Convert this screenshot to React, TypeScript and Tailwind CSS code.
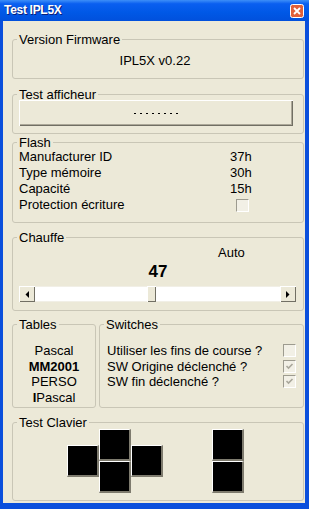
import React from 'react';

const Group: React.FC<{ label: string; className?: string; children?: React.ReactNode }> = ({ label, className = '', children }) => (
    <fieldset className={`border border-[#c9c6b6] rounded-[3px] min-w-0 ${className}`}>
        <legend className="ml-[4px] px-[2px] leading-[15px]">{label}</legend>
        {children}
    </fieldset>
);

const Check: React.FC<{ checked?: boolean }> = ({ checked }) => (
    <div className="w-[13px] h-[13px] border-t border-l border-[#9d9b8f] border-r border-b border-r-white border-b-white bg-[#f2f0e6] flex items-center justify-center">
        {checked && (
            <svg width="9" height="9" viewBox="0 0 9 9">
                <path d="M1.5 4 L3.5 6 L7.5 2" stroke="#a9a79b" strokeWidth="1.6" fill="none" />
            </svg>
        )}
    </div>
);

const Key: React.FC = () => (
    <div className="w-[32px] h-[32px] bg-black border-t border-l border-white border-r-2 border-b-2 border-r-[#7e7b6e] border-b-[#7e7b6e]" />
);

const ArrowBtn: React.FC<{ dir: 'left' | 'right' }> = ({ dir }) => (
    <div className="w-[16px] h-[16px] bg-[#ece9d8] flex items-center justify-center shadow-[inset_1px_1px_0_#fff,inset_-1px_-1px_0_#716f64]">
        <svg width="4" height="7" viewBox="0 0 4 7">
            {dir === 'left' ? <polygon points="4,0 4,7 0.5,3.5" fill="#000" /> : <polygon points="0,0 0,7 3.5,3.5" fill="#000" />}
        </svg>
    </div>
);

export default function App() {
    return (
        <div className="w-[309px] h-[509px] bg-[#0a4fdc] flex flex-col font-['Liberation_Sans',Arial,sans-serif] text-[13px] leading-[15px] text-black overflow-hidden">
            {/* Title bar */}
            <div className="h-[21px] flex items-center justify-between bg-[linear-gradient(to_bottom,#3d8ff8_0%,#0a5ff0_18%,#0058e6_60%,#0150dc_100%)]">
                <span className="pl-[4px] text-[12px] font-bold text-white tracking-[-0.3px] [text-shadow:1px_1px_0_#0a1e7a]">Test IPL5X</span>
                <svg width="14" height="14" viewBox="0 0 14 14" className="mr-[5px]">
                    <rect x="0.5" y="0.5" width="13" height="13" rx="2" fill="#e0603a" stroke="#fff" />
                    <path d="M4 4 L10 10 M10 4 L4 10" stroke="#fff" strokeWidth="1.8" />
                </svg>
            </div>

            {/* Body */}
            <div className="flex-1 ml-[3px] mr-[4px] mb-[6px] bg-[#ece9d8] pl-[9px] pr-[1px] pt-[11px] flex flex-col">
                <Group label="Version Firmware" className="h-[47px]">
                    <div className="pt-[6px] pr-[6px] text-center">IPL5X v0.22</div>
                </Group>

                <Group label="Test afficheur" className="h-[47px] mt-[8px]">
                    <div className="-mt-[2px] ml-[6px] mr-[10px] h-[26px] flex items-center justify-center gap-[4px] bg-[#ece9d8] shadow-[inset_1px_1px_0_#fff,inset_-1px_-1px_0_#716f64,inset_-2px_-2px_0_#aca899]">
                        {[0, 1, 2, 3, 4, 5, 6, 7].map((i) => (
                            <span key={i} className="w-[2px] h-[1px] bg-black" />
                        ))}
                    </div>
                </Group>

                <Group label="Flash" className="h-[88px] mt-[1px]">
                    <div className="-mt-[1px] pl-[6px] grid grid-cols-[211px_1fr] leading-[16px]">
                        <div>Manufacturer ID</div>
                        <div>37h</div>
                        <div>Type mémoire</div>
                        <div>30h</div>
                        <div>Capacité</div>
                        <div>15h</div>
                        <div>Protection écriture</div>
                        <div className="flex items-center h-[16px] pl-[6px]">
                            <Check />
                        </div>
                    </div>
                </Group>

                <Group label="Chauffe" className="h-[81px] mt-[7px]">
                    <div className="pl-[205px]">Auto</div>
                    <div className="mt-[2px] text-center text-[17px] leading-[20px] font-bold">47</div>
                    <div className="mt-[4px] ml-[6px] w-[277px] h-[16px] flex">
                        <ArrowBtn dir="left" />
                        <div className="w-[112px] bg-white border-y border-[#f1efe6]" />
                        <div className="w-[9px] bg-[#ece9d8] shadow-[inset_1px_1px_0_#fff,inset_-1px_-1px_0_#716f64]" />
                        <div className="flex-1 bg-white border-y border-[#f1efe6]" />
                        <ArrowBtn dir="right" />
                    </div>
                </Group>

                <div className="flex mt-[6px]">
                    <Group label="Tables" className="w-[84px] h-[91px]">
                        <div className="pt-[11px] text-center leading-[15.5px]">
                            <div>Pascal</div>
                            <div className="font-bold">MM2001</div>
                            <div>PERSO</div>
                            <div><span className="font-bold">I</span>Pascal</div>
                        </div>
                    </Group>
                    <Group label="Switches" className="flex-1 ml-[3px] h-[91px]">
                        <div className="pt-[11px] pl-[7px] pr-[7px] grid grid-cols-[1fr_13px] leading-[15.5px] items-center">
                            <div>Utiliser les fins de course ?</div>
                            <Check />
                            <div>SW Origine déclenché ?</div>
                            <Check checked />
                            <div>SW fin déclenché ?</div>
                            <Check checked />
                        </div>
                    </Group>
                </div>

                <Group label="Test Clavier" className="h-[86px] mt-[7px]">
                    <div className="-mt-[1px] ml-[54px] flex items-start">
                        <div className="flex items-center h-[64px]">
                            <Key />
                            <div className="flex flex-col">
                                <Key />
                                <Key />
                            </div>
                            <Key />
                        </div>
                        <div className="ml-[49px] flex flex-col">
                            <Key />
                            <Key />
                        </div>
                    </div>
                </Group>
            </div>
        </div>
    );
}
